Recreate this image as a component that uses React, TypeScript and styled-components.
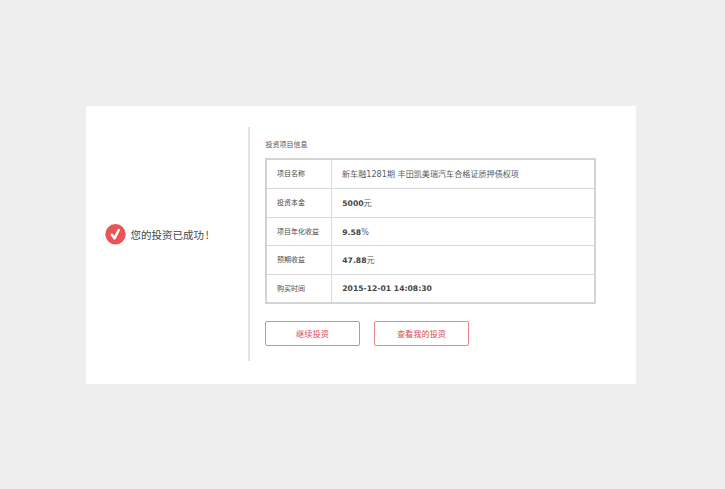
import React from "react";
import styled, { createGlobalStyle } from "styled-components";

const GlobalStyle = createGlobalStyle`
  * { box-sizing: border-box; }
  body {
    margin: 0;
    background: #eeeeee;
    font-family: "Noto Sans CJK SC", sans-serif;
    color: #4a4a4a;
  }
`;

const Page = styled.main`
  min-height: 489px;
  padding: 106px 89px 105px 86px;
`;

const Panel = styled.section`
  display: flex;
  height: 278px;
  padding: 21px 39px 23px 0;
  background: #fff;
`;

const Status = styled.div`
  display: flex;
  align-items: center;
  gap: 4.5px;
  width: 164px;
  padding: 0 0 20px 19px;
  border-right: 2px solid #e3e3e3;
`;

const StatusIcon = styled.svg`
  flex: none;
  width: 21px;
  height: 21px;
`;

const StatusText = styled.h1`
  margin: 0;
  padding-top: 2px;
  font-size: 10.5px;
  font-weight: 400;
  line-height: 20px;
  white-space: nowrap;
  color: #454545;
`;

const Mark = styled.span`
  margin-left: 1.5px;
`;

const Details = styled.div`
  flex: 1;
  padding: 10px 0 0 15px;
`;

const Heading = styled.h2`
  margin: 0 0 7px;
  padding-left: 0.5px;
  font-size: 7px;
  font-weight: 400;
  line-height: 14px;
  color: #555;
`;

const Table = styled.dl`
  display: grid;
  grid-template-rows: 28px 29px 28px 29px 28px;
  width: 331px;
  height: 146px;
  margin: 0;
  border: 2px solid #d4d4d4;
`;

const Row = styled.div`
  display: grid;
  grid-template-columns: 65px 1fr;
  & + & {
    border-top: 1px solid #d9d9d9;
  }
`;

const Label = styled.dt`
  display: flex;
  align-items: center;
  padding: 0 0 2px 10px;
  border-right: 1px solid #d9d9d9;
  font-size: 7px;
  line-height: 12px;
  color: #4a4a4a;
`;

const Value = styled.dd`
  display: flex;
  align-items: baseline;
  margin: 0;
  padding: 8px 0 0 10px;
  font-family: "DejaVu Sans", "Noto Sans CJK SC", sans-serif;
  font-size: 8.1px;
  line-height: 12px;
  white-space: pre;
  color: #5c5c5c;
`;

const Strong = styled.strong`
  padding-left: 0.3px;
  font-size: 7.65px;
  font-weight: 700;
  color: #444;
`;

const Actions = styled.div`
  display: flex;
  gap: 14px;
  margin-top: 17px;
`;

const Button = styled.button`
  width: 95px;
  height: 25px;
  padding: 0;
  border: 1px solid #e5858a;
  border-radius: 2px;
  background: #fff;
  font: 400 8.2px/23px "Noto Sans CJK SC", sans-serif;
  color: #dc4b55;
`;

const rows = [
  { label: "项目名称", text: "新车融1281期 丰田凯美瑞汽车合格证质押债权项" },
  { label: "投资本金", strong: "5000", text: "元" },
  { label: "项目年化收益", strong: "9.58", text: "%" },
  { label: "预期收益", strong: "47.88", text: "元" },
  { label: "购买时间", strong: "2015-12-01 14:08:30" },
];

export default function App() {
  return (
    <>
      <GlobalStyle />
      <Page>
        <Panel>
          <Status>
            <StatusIcon viewBox="0 0 21 21" aria-hidden="true">
              <circle cx="10.5" cy="10.2" r="10.2" fill="#e95458" />
              <path d="M6.9 10.8 9.5 14.3 13.8 6" fill="none" stroke="#fff" strokeWidth="2.5" strokeLinecap="round" strokeLinejoin="round" />
            </StatusIcon>
            <StatusText>您的投资已成功<Mark>!</Mark></StatusText>
          </Status>
          <Details>
            <Heading>投资项目信息</Heading>
            <Table>
              {rows.map((row) => (
                <Row key={row.label}>
                  <Label>{row.label}</Label>
                  <Value>
                    {row.strong && <Strong>{row.strong}</Strong>}
                    {row.text}
                  </Value>
                </Row>
              ))}
            </Table>
            <Actions>
              <Button type="button">继续投资</Button>
              <Button type="button">查看我的投资</Button>
            </Actions>
          </Details>
        </Panel>
      </Page>
    </>
  );
}
